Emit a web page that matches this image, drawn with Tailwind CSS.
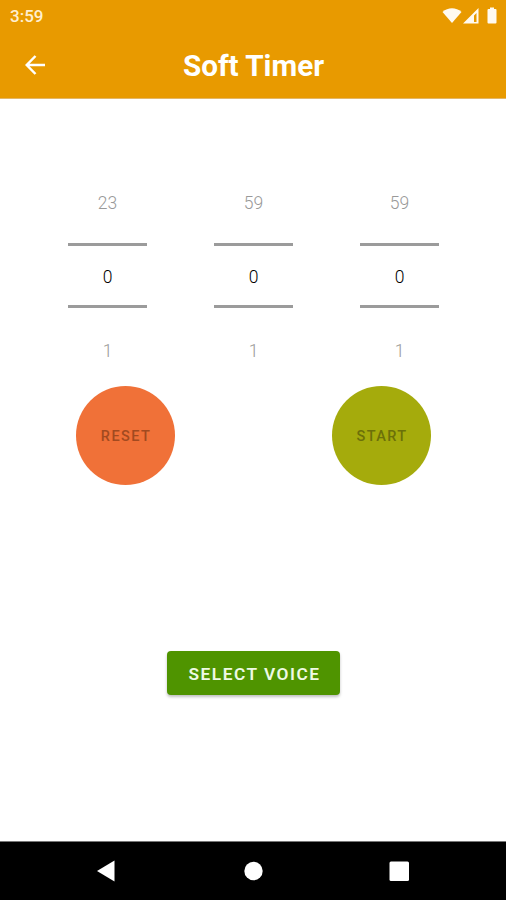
<!DOCTYPE html>
<html lang="en">
<head>
<meta charset="utf-8">
<title>Soft Timer</title>
<script src="https://cdn.jsdelivr.net/npm/@tailwindcss/browser@4"></script>
</head>
<body class="bg-white font-['Roboto',sans-serif]">
<div class="flex flex-col w-[506px] h-[900px] overflow-hidden">
  <header class="h-[99px] shrink-0 bg-[#e89a00] border-b border-[#e3b667] text-white">
    <div class="h-8 flex items-center justify-between pl-[10px] pr-[8px]">
      <span class="text-[17px] leading-8 font-medium text-[#ffefd0]">3:59</span>
      <svg class="w-[56px] h-[18px]" viewBox="0 0 56 18" fill="#fffaf0">
        <path d="M0.500 5C6 0 14 0 19.500 5L10 16Z"/>
        <path fill-rule="evenodd" d="M21 16.500L36.500 1V16.500ZM32 8.500L34.500 6V15H32Z"/>
        <path d="M48 0.500h4v1.500h1.500a1 1 0 0 1 1 1v12.500a1 1 0 0 1-1 1h-7a1 1 0 0 1-1-1v-12.500a1 1 0 0 1 1-1H48Z"/>
      </svg>
    </div>
    <div class="h-[66px] grid grid-cols-[70px_1fr_69px] items-center">
      <svg class="w-5 h-5 ml-[25px] mb-[1px]" viewBox="0 0 20 20" fill="none" stroke="#fff" stroke-width="2.500"><path d="M20 10H2M10.500 1L1.700 10L10.500 19"/></svg>
      <h1 class="text-center text-[29.700px] leading-[34px] font-bold pt-[1px]">Soft Timer</h1>
    </div>
  </header>
  <main class="flex-1 flex flex-col">
    <div class="flex justify-between pl-[68px] pr-[67px] pt-[87px] text-center text-[17.500px] font-light">
      <div class="w-[79px]"><div class="h-[34px] leading-[34px] text-[#999]">23</div><div class="mt-[23px] h-[65px] border-y-3 border-[#9b9b9b] leading-[62px] text-black">0</div><div class="mt-[26px] h-[34px] leading-[34px] text-[#999]">1</div></div>
      <div class="w-[79px]"><div class="h-[34px] leading-[34px] text-[#999]">59</div><div class="mt-[23px] h-[65px] border-y-3 border-[#9b9b9b] leading-[62px] text-black">0</div><div class="mt-[26px] h-[34px] leading-[34px] text-[#999]">1</div></div>
      <div class="w-[79px]"><div class="h-[34px] leading-[34px] text-[#999]">59</div><div class="mt-[23px] h-[65px] border-y-3 border-[#9b9b9b] leading-[62px] text-black">0</div><div class="mt-[26px] h-[34px] leading-[34px] text-[#999]">1</div></div>
    </div>
    <div class="flex justify-between pl-[76px] pr-[75px] mt-[18px] text-[14.500px] font-medium tracking-[1.400px]">
      <button class="size-[99px] rounded-full bg-[#f07138] text-[#a24a20] pl-[1px] pt-[3px]">RESET</button>
      <button class="size-[99px] rounded-full bg-[#a5ab0c] text-[#6c7009] pl-[1px] pt-[3px]">START</button>
    </div>
    <button class="mt-[166px] ml-[167px] w-[173px] h-[44px] rounded-[4px] bg-[#4f9400] text-[#eefae4] text-[17.300px] font-semibold tracking-[1.500px] pl-[2px] pt-[3px] shadow-[0_2px_3px_rgba(0,0,0,0.25)]">SELECT VOICE</button>
  </main>
  <nav class="h-[59px] shrink-0 bg-black border-t border-[#777]">
    <svg class="block w-[506px] h-[58px]" viewBox="0 842 506 58" fill="#fff"><path d="M97 871L114.500 860.500V881.500Z"/><circle cx="253.500" cy="871" r="9.200"/><rect x="389.500" y="861.500" width="19.500" height="19.500" rx="1.500"/></svg>
  </nav>
</div>
</body>
</html>
